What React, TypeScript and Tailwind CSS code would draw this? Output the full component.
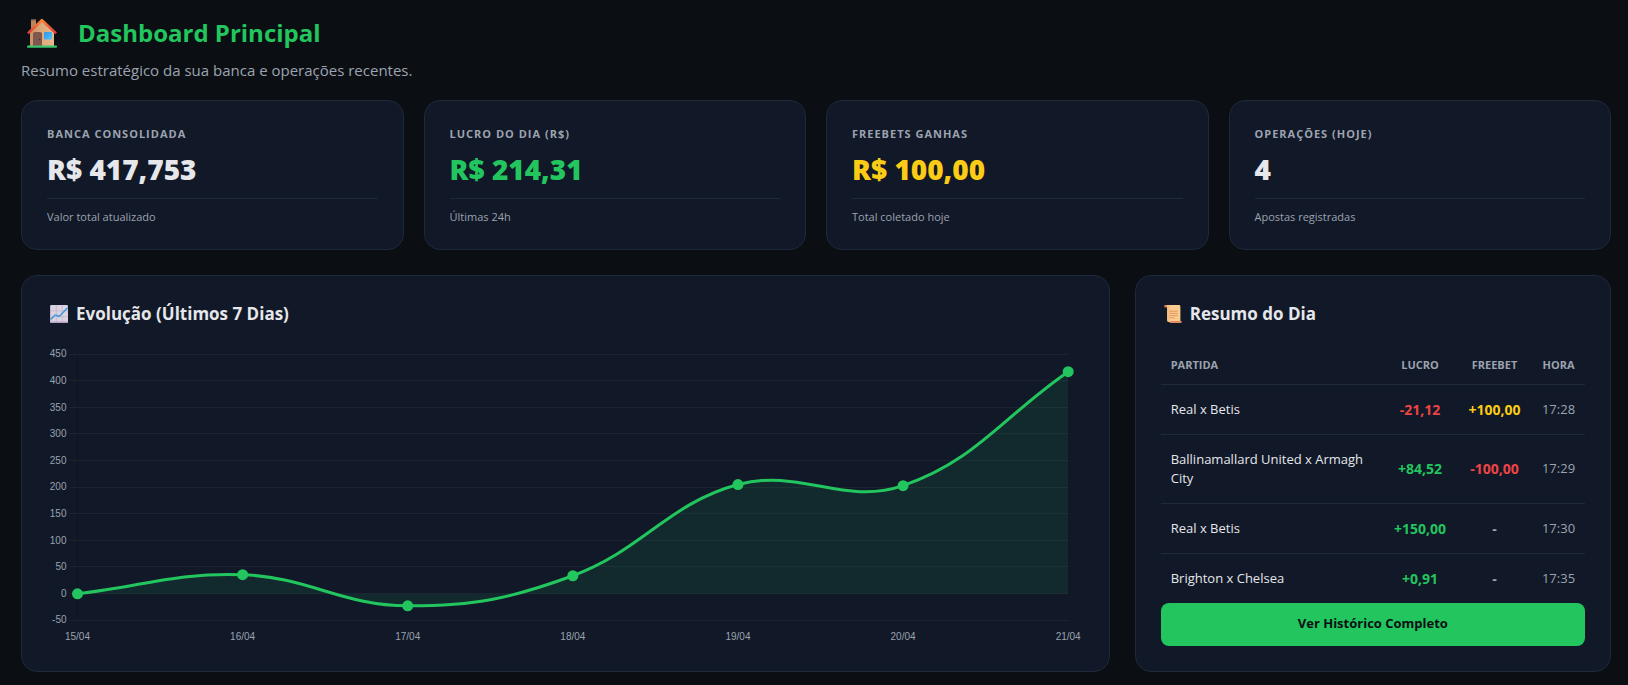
import { clsx } from "clsx";

const stats = [
  { label: "Banca Consolidada", value: "R$ 417,753", note: "Valor total atualizado", color: "text-gray-200" },
  { label: "Lucro do Dia (R$)", value: "R$ 214,31", note: "Últimas 24h", color: "text-[#22c55e]" },
  { label: "Freebets Ganhas", value: "R$ 100,00", note: "Total coletado hoje", color: "text-[#facc15]" },
  { label: "Operações (Hoje)", value: "4", note: "Apostas registradas", color: "text-gray-200" },
];

const history = [
  { day: "15/04", value: 0 },
  { day: "16/04", value: 36 },
  { day: "17/04", value: -22.6 },
  { day: "18/04", value: 34 },
  { day: "19/04", value: 205.5 },
  { day: "20/04", value: 203.4 },
  { day: "21/04", value: 417.7 },
];

const bets = [
  { match: "Real x Betis", profit: "-21,12", freebet: "+100,00", time: "17:28" },
  { match: "Ballinamallard United x Armagh City", profit: "+84,52", freebet: "-100,00", time: "17:29" },
  { match: "Real x Betis", profit: "+150,00", freebet: "-", time: "17:30" },
  { match: "Brighton x Chelsea", profit: "+0,91", freebet: "-", time: "17:35" },
];

const ticks = [450, 400, 350, 300, 250, 200, 150, 100, 50, 0, -50];

const LEFT = 30.5;
const RIGHT = 1021.5;
const TOP = 9.5;
const BOTTOM = 275.5;
const TENSION = 0.4;

type Point = { x: number; y: number };

const xAt = (i: number) => LEFT + (i * (RIGHT - LEFT)) / (history.length - 1);
const yAt = (v: number) => TOP + ((450 - v) * (BOTTOM - TOP)) / 500;

// smooth line through all the points
function curve(points: Point[]) {
  const controls = points.map((p, i) => {
    const prev = points[i - 1] ?? p;
    const next = points[i + 1] ?? p;
    const before = Math.hypot(p.x - prev.x, p.y - prev.y);
    const after = Math.hypot(next.x - p.x, next.y - p.y);
    const fa = (TENSION * before) / (before + after);
    const fb = (TENSION * after) / (before + after);
    return {
      inX: p.x - fa * (next.x - prev.x),
      inY: p.y - fa * (next.y - prev.y),
      outX: p.x + fb * (next.x - prev.x),
      outY: p.y + fb * (next.y - prev.y),
    };
  });

  return points
    .map((p, i) => {
      if (i === 0) return `M${p.x},${p.y}`;
      const a = controls[i - 1];
      const b = controls[i];
      return `C${a.outX},${a.outY} ${b.inX},${b.inY} ${p.x},${p.y}`;
    })
    .join(" ");
}

function HouseIcon() {
  return (
    <svg viewBox="0 0 32 32" className="size-8 shrink-0" aria-hidden="true">
      <defs>
        <linearGradient id="wall" x1="0" x2="1">
          <stop offset="0" stopColor="#c98f62" />
          <stop offset="0.5" stopColor="#dfaa7c" />
          <stop offset="1" stopColor="#e6b88c" />
        </linearGradient>
        <linearGradient id="roof" x1="0" y1="0" x2="0" y2="1">
          <stop offset="0" stopColor="#ff8436" />
          <stop offset="1" stopColor="#dc3a3c" />
        </linearGradient>
        <linearGradient id="window" x1="0" y1="0" x2="1" y2="1">
          <stop offset="0" stopColor="#2a95e6" />
          <stop offset="1" stopColor="#52c4fa" />
        </linearGradient>
      </defs>
      <rect x="5" y="2" width="5" height="12" rx="0.6" fill="#b8845c" />
      <rect x="5" y="2" width="5" height="1.6" rx="0.6" fill="#77503f" />
      <path d="M16 4 28 15V29H4V15Z" fill="url(#wall)" />
      <path d="M7 29V17a2 2 0 0 1 2-2h5a2 2 0 0 1 2 2v12Z" fill="#80574f" />
      <circle cx="13.6" cy="22.5" r="0.7" fill="#4d302c" />
      <rect x="18" y="15" width="8" height="7.4" rx="1.2" fill="url(#window)" />
      <path d="m1.9 16.4 14-13.2 14.2 13.2" fill="none" stroke="url(#roof)" strokeWidth="2.6" strokeLinejoin="round" />
      <rect x="1" y="28.6" width="30" height="2.2" rx="1" fill="#3bc46c" />
    </svg>
  );
}

function TrendIcon() {
  return (
    <svg viewBox="0 0 18 18" className="size-[18px] shrink-0" aria-hidden="true">
      <rect width="18" height="18" rx="1.4" fill="#dcd3e2" />
      <path d="M0 16.6h18v.6a.8.8 0 0 1-.8.8H.8a.8.8 0 0 1-.8-.8Z" fill="#b79fc6" />
      <path d="M.4 1v16" stroke="#b9a9c6" strokeWidth="0.8" />
      <path d="M6.3 0v17M12.2 0v17M0 5.8h18M0 11.8h18" stroke="#c3b6cd" strokeWidth="0.8" />
      <path d="m.6 14.6 4.2-4.3q.8-.8 1.7-.1l1.4.9q.9.5 1.7-.2L17.6 2.8" fill="none" stroke="#3c95d3" strokeWidth="1.4" />
    </svg>
  );
}

function ScrollIcon() {
  return (
    <svg viewBox="0 0 18 18" className="size-[18px] shrink-0" aria-hidden="true">
      <path d="M1.2 0H5v2.6H1.6Q.2 2.6.2 1.2T1.2 0Z" fill="#d97b54" />
      <path d="M2 0h13q1.4 0 1.4 1.4V17H5q-1.8 0-1.8-1.8V2Q3.2.4 2 0Z" fill="#fccb8e" />
      <path d="M3.2 2v13.2Q3.2 17 5 17h1V0H2.4q.8.6.8 2Z" fill="#f7bf81" />
      <path d="M6.6 16h10.6q.6 0 .6.7 0 1.3-1.4 1.3H5q1.600-.4 1.600-2Z" fill="#e28a63" />
      <path d="M5.4 6.2h8.400M5.400 8.400h8.400M5.400 10.600h8.400M5.400 12.800h5.400" stroke="#dc9260" strokeWidth="0.9" />
    </svg>
  );
}

function StatCard({ label, value, note, color }: (typeof stats)[number]) {
  return (
    <div className="rounded-2xl border border-gray-800 bg-[#111827] p-[25px]">
      <p className="text-[11px] leading-4 font-bold uppercase tracking-[1px] text-[#9ca3af]">{label}</p>
      <p className={clsx("mt-[7px] text-[28px] leading-10 font-extrabold", color)}>{value}</p>
      <p className="mt-[9px] border-t border-gray-800 pt-2.5 text-[11px] leading-[15px] text-[#9ca3af]">{note}</p>
    </div>
  );
}

function EvolutionChart() {
  const points = history.map((h, i) => ({ x: xAt(i), y: yAt(h.value) }));
  const line = curve(points);

  return (
    <svg viewBox="0 0 1037 300" className="mt-[18px] block w-full" role="img" aria-label="Evolução da banca nos últimos 7 dias">
      <path d={`M${LEFT},${TOP}V${BOTTOM}`} stroke="#000000" strokeOpacity="0.2" />
      {ticks.map((t) => (
        <g key={t}>
          <line x1={LEFT - 8} x2={RIGHT} y1={Math.round(yAt(t)) - 0.5} y2={Math.round(yAt(t)) - 0.5} stroke="#1d2432" />
          <text x="19.5" y={yAt(t) + 3} textAnchor="end" className="fill-[#9ca3af] font-['Liberation_Sans',sans-serif] text-[10px]">
            {t}
          </text>
        </g>
      ))}
      <path d={`${line} V${yAt(0)} H${LEFT} Z`} fill="#22c55e" fillOpacity="0.1" />
      <path d={line} fill="none" stroke="#22c55e" strokeWidth="3" />
      {points.map((p, i) => (
        <g key={history[i].day}>
          <circle cx={p.x} cy={p.y} r="5.5" fill="#22c55e" />
          <text x={p.x} y="295" textAnchor="middle" className="fill-[#9ca3af] font-['Liberation_Sans',sans-serif] text-[10px]">
            {history[i].day}
          </text>
        </g>
      ))}
    </svg>
  );
}

function BetsTable() {
  return (
    <table className="mt-[18px] w-full table-fixed border-collapse text-[13px] leading-[19px]">
      <colgroup>
        <col />
        <col className="w-[74px]" />
        <col className="w-[75px]" />
        <col className="w-[53px]" />
      </colgroup>
      <thead>
        <tr className="h-[39px] border-b border-gray-800 text-[11px] uppercase text-[#9ca3af]">
          <th className="px-2.5 text-left font-bold">Partida</th>
          <th className="font-bold">Lucro</th>
          <th className="font-bold">Freebet</th>
          <th className="font-bold">Hora</th>
        </tr>
      </thead>
      <tbody>
        {bets.map((b) => (
          <tr key={b.time} className="border-b border-gray-800 last:border-b-0">
            <td className="px-2.5 py-[15px] text-gray-200">{b.match}</td>
            <td
              className={clsx(
                "text-center text-[14px] leading-[19px] font-bold",
                b.profit.startsWith("-") ? "text-[#ef4444]" : "text-[#22c55e]"
              )}
            >
              {b.profit}
            </td>
            <td
              className={clsx(
                "text-center text-[14px] leading-[19px] font-bold",
                b.freebet === "-" ? "text-[#9ca3af]" : b.freebet.startsWith("-") ? "text-[#ef4444]" : "text-[#facc15]"
              )}
            >
              {b.freebet}
            </td>
            <td className="text-center text-[#9ca3af]">{b.time}</td>
          </tr>
        ))}
      </tbody>
    </table>
  );
}

export default function App() {
  return (
    <main className="min-h-screen bg-[#0b0f14] pt-[13px] pr-[17px] pb-3 pl-[21px] font-['Open_Sans','Noto_Sans',sans-serif]">
      <header>
        <h1 className="flex h-10 items-center gap-5 pl-[5px] text-2xl font-bold text-[#22c55e]">
          <HouseIcon />
          Dashboard Principal
        </h1>
        <p className="mt-[5px] text-[15px] leading-6 text-[#9ca3af]">Resumo estratégico da sua banca e operações recentes.</p>
      </header>

      <section className="mt-[18px] grid grid-cols-2 gap-5 lg:grid-cols-4">
        {stats.map((s) => (
          <StatCard key={s.label} {...s} />
        ))}
      </section>

      <div className="mt-[25px] grid gap-[25px] lg:grid-cols-[minmax(0,16fr)_minmax(0,7fr)]">
        <section className="rounded-2xl border border-gray-800 bg-[#111827] p-[25px]">
          <h2 className="flex items-center gap-2 pl-[3px] text-[17px] leading-[26px] font-bold text-gray-200">
            <TrendIcon />
            Evolução (Últimos 7 Dias)
          </h2>
          <EvolutionChart />
        </section>

        <section className="flex flex-col rounded-2xl border border-gray-800 bg-[#111827] p-[25px]">
          <h2 className="flex items-center gap-2 pl-[3px] text-[17px] leading-[26px] font-bold text-gray-200">
            <ScrollIcon />
            Resumo do Dia
          </h2>
          <BetsTable />
          <button
            type="button"
            className="mt-auto h-[43px] w-full cursor-pointer rounded-lg bg-[#22c55e] text-[13px] font-bold text-[#0b0f14] hover:bg-green-400"
          >
            Ver Histórico Completo
          </button>
        </section>
      </div>
    </main>
  );
}
